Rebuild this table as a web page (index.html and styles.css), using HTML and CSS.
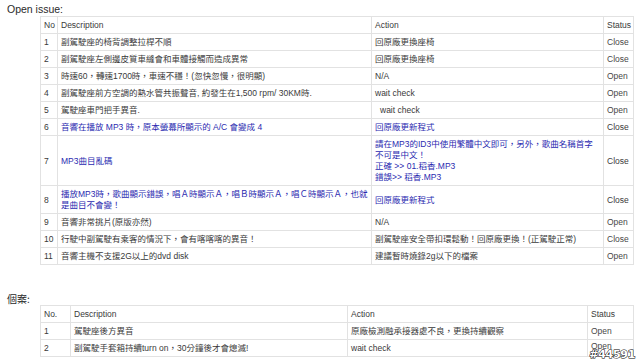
FILE: index.html
```html
<!DOCTYPE html>
<html>
<head>
<meta charset="utf-8">
<link rel="stylesheet" href="styles.css">
</head>
<body>
<div class="page">
  <div class="heading">Open issue:</div>
  <table class="grid t1">
    <colgroup><col class="c-no"><col class="c-desc"><col class="c-act"><col class="c-st"></colgroup>
    <tr><td>No</td><td>Description</td><td>Action</td><td>Status</td></tr>
    <tr><td>1</td><td class="zh">副駕駛座的椅背調整拉桿不順</td><td class="zh">回原廠更換座椅</td><td class="st">Close</td></tr>
    <tr><td>2</td><td class="zh">副駕駛座左側邊皮質車縫會和車體接觸而造成異常</td><td class="zh">回原廠更換座椅</td><td class="st">Close</td></tr>
    <tr><td>3</td><td class="zh">時速60，轉速1700時，車速不穩！(忽快忽慢，很明顯)</td><td>N/A</td><td class="st">Open</td></tr>
    <tr><td>4</td><td class="zh">副駕駛座前方空調的熱水管共振聲音, 約發生在1,500 rpm/ 30KM時.</td><td>wait check</td><td class="st">Open</td></tr>
    <tr><td>5</td><td class="zh">駕駛座車門把手異音.</td><td class="indent">wait check</td><td class="st">Open</td></tr>
    <tr class="blue"><td>6</td><td class="zh">音響在播放 MP3 時，原本螢幕所顯示的 A/C 會變成 4</td><td class="zh">回原廠更新程式</td><td class="st">Close</td></tr>
    <tr class="blue"><td>7</td><td class="zh">MP3曲目亂碼</td><td class="zh">請在MP3的ID3中使用繁體中文即可，另外，歌曲名稱首字<br>不可是中文！<br>正確 &gt;&gt; 01.稻香.MP3<br>錯誤&gt;&gt; 稻香.MP3</td><td class="st">Close</td></tr>
    <tr class="blue"><td>8</td><td class="zh">播放MP3時，歌曲顯示錯誤，唱Ａ時顯示Ａ，唱Ｂ時顯示Ａ，唱Ｃ時顯示Ａ，也就<br>是曲目不會變！</td><td class="zh">回原廠更新程式</td><td class="st">Close</td></tr>
    <tr><td>9</td><td class="zh">音響非常挑片(原版亦然)</td><td>N/A</td><td class="st">Open</td></tr>
    <tr><td>10</td><td class="zh">行駛中副駕駛有乘客的情況下，會有喀喀喀的異音！</td><td class="zh">副駕駛座安全帶扣環鬆動！回原廠更換！(正駕駛正常)</td><td class="st">Close</td></tr>
    <tr><td>11</td><td class="zh">音響主機不支援2G以上的dvd disk</td><td class="zh">建議暫時燒錄2g以下的檔案</td><td class="st">Open</td></tr>
  </table>

  <div class="heading heading2">個案:</div>
  <table class="grid t2">
    <colgroup><col class="c2-no"><col class="c2-desc"><col class="c2-act"><col class="c2-st"></colgroup>
    <tr><td>No.</td><td>Description</td><td>Action</td><td>Status</td></tr>
    <tr><td>1</td><td class="zh">駕駛座後方異音</td><td class="zh">原廠檢測融承接器處不良，更換持續觀察</td><td class="st">Open</td></tr>
    <tr><td>2</td><td class="zh">副駕駛手套箱持續turn on，30分鐘後才會熄滅!</td><td>wait check</td><td class="st st-last">Open</td></tr>
  </table>
</div>
<div class="mark">#44591</div>
</body>
</html>
```

FILE: styles.css
```css
html, body {
  margin: 0;
  padding: 0;
  background: #ffffff;
}
body {
  width: 640px;
  height: 362px;
  overflow: hidden;
  position: relative;
  font-family: "Liberation Sans", "Noto Sans CJK TC", sans-serif;
  color: #3a3a3a;
}
.page {
  padding-left: 7px;
}
.heading {
  font-size: 10.5px;
  line-height: 13px;
  padding-top: 3px;
  color: #2a2a2a;
}
.heading2 {
  padding-top: 28px;
  font-family: "Noto Sans CJK TC", sans-serif;
  font-size: 10px;
  line-height: 12px;
}
.grid {
  margin-left: 33px;
  width: 593px;
  table-layout: fixed;
  border-collapse: collapse;
  font-size: 8.5px;
  line-height: 11px;
}
.grid td {
  border: 1px solid #e2e2e2;
  padding: 3px 3px 2px 3px;
  vertical-align: middle;
  white-space: nowrap;
  overflow: hidden;
}
.c-no { width: 17px; }
.c-desc { width: 314px; }
.c-act { width: 232px; }
.c-st { width: 30px; }
.c2-no { width: 30px; }
.c2-desc { width: 277px; }
.c2-act { width: 240px; }
.c2-st { width: 46px; }
.zh {
  font-family: "Liberation Sans", "Noto Sans CJK TC", sans-serif;
}
.st { color: #484848; }
.st-last { padding-top: 1px !important; padding-bottom: 4px !important; }
.indent { padding-left: 8px !important; }
.blue td { color: #2a2ab0; }
.blue td:first-child, .blue td.st { color: #3a3a3a; }
.mark {
  position: absolute;
  right: 5px;
  bottom: 2px;
  font-family: "DejaVu Sans", sans-serif;
  font-weight: bold;
  font-size: 11px;
  line-height: 11px;
  color: #ffffff;
  -webkit-text-stroke: 1px #000000;
  paint-order: stroke fill;
  letter-spacing: -0.3px;
}
```
